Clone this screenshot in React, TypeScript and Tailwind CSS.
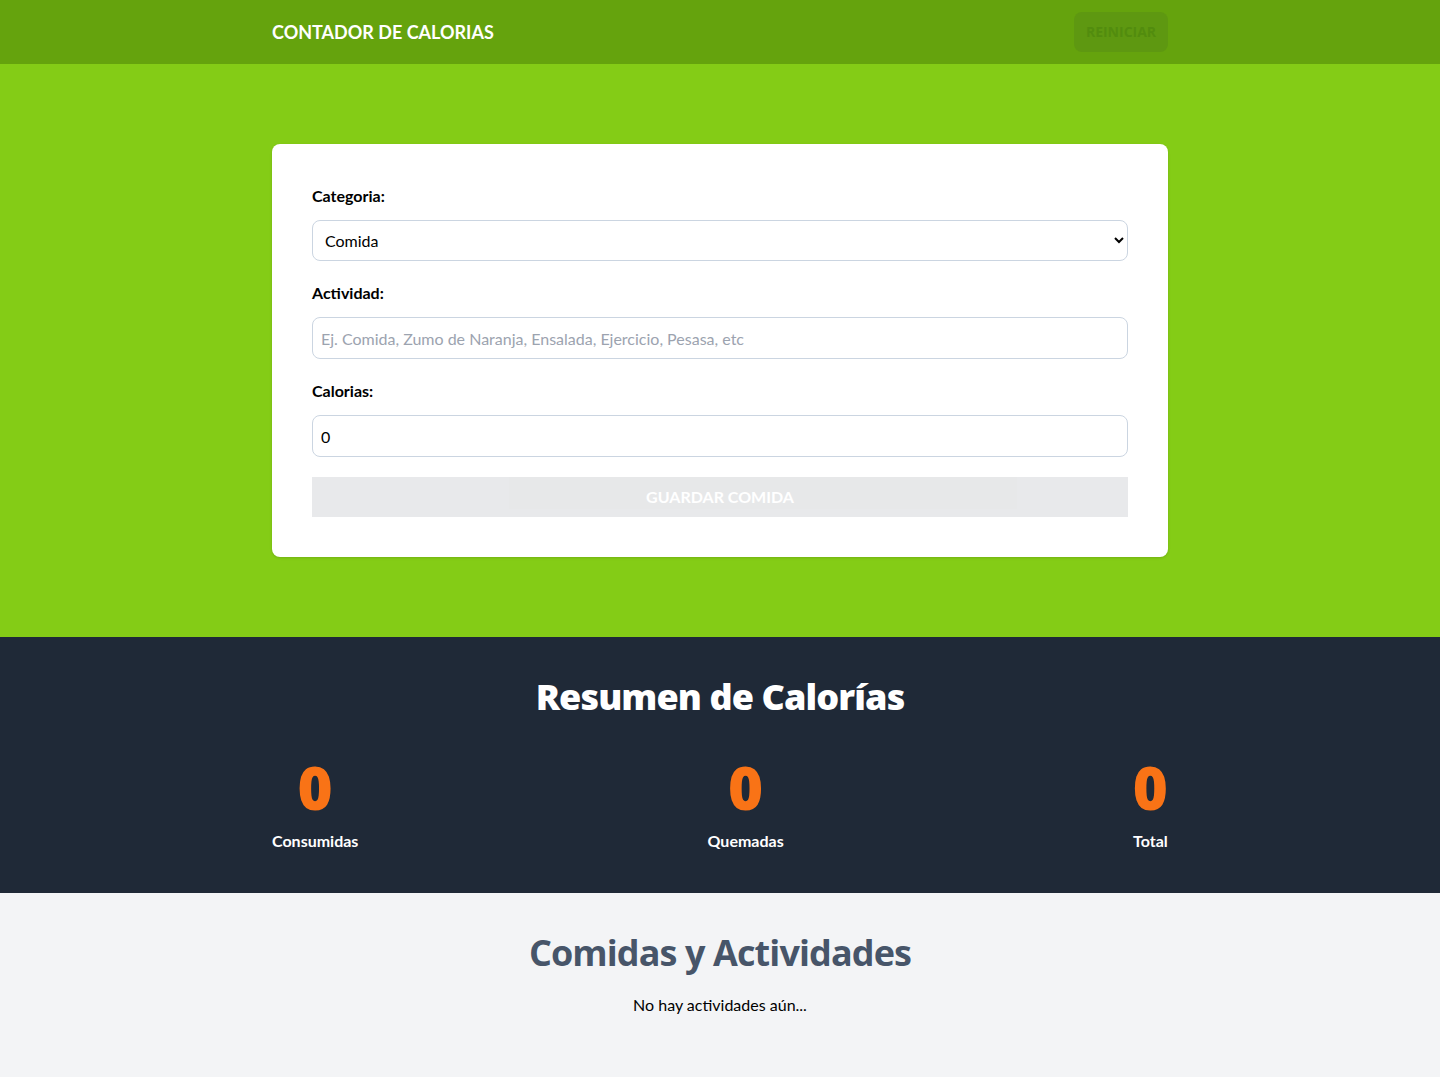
import { useState } from "react";

const font = { fontFamily: 'Lato, "Open Sans", sans-serif' };
const heavy = { fontFamily: '"Open Sans", Lato, sans-serif' };

function Stat({ value, label }: { value: number; label: string }) {
  return (
    <p className="grid grid-cols-1 gap-3 text-center font-bold text-white">
      <span style={heavy} className="text-6xl font-black leading-none text-[#f97316]">{value}</span>
      {label}
    </p>
  );
}

export default function App() {
  const [category, setCategory] = useState("1");
  const [name, setName] = useState("");
  const [calories, setCalories] = useState(0);

  const valid = name.trim() !== "" && calories > 0;

  return (
    <div style={font} className="min-h-screen bg-[#f3f4f6]">
      <header className="bg-[#65a30d] py-3">
        <div className="mx-auto flex max-w-4xl items-center justify-between">
          <h1 className="text-lg font-bold uppercase text-white">Contador de Calorias</h1>
          <button
            disabled
            style={heavy}
            className="h-10 w-[94px] rounded-lg bg-[#5e9811] text-sm font-bold uppercase text-[#528c0e]"
          >
            Reiniciar
          </button>
        </div>
      </header>

      <section className="bg-[#84cc16] px-5 py-20">
        <div className="mx-auto max-w-4xl">
          <form className="space-y-5 rounded-lg bg-white p-10 shadow" onSubmit={(e) => e.preventDefault()}>
            <div className="grid grid-cols-1 gap-3">
              <label htmlFor="category" className="font-bold">Categoria:</label>
              <select
                id="category"
                value={category}
                onChange={(e) => setCategory(e.target.value)}
                className="h-[41px] w-full rounded-lg border border-[#cbd5e1] bg-white px-2"
              >
                <option value="1">Comida</option>
                <option value="2">Ejercicio</option>
              </select>
            </div>

            <div className="grid grid-cols-1 gap-3">
              <label htmlFor="name" className="font-bold">Actividad:</label>
              <input
                id="name"
                type="text"
                value={name}
                onChange={(e) => setName(e.target.value)}
                className="h-[42px] rounded-lg border border-[#cbd5e1] p-2 placeholder:text-[#9ca3af]"
                placeholder="Ej. Comida, Zumo de Naranja, Ensalada, Ejercicio, Pesasa, etc"
              />
            </div>

            <div className="grid grid-cols-1 gap-3">
              <label htmlFor="calories" className="font-bold">Calorias:</label>
              <input
                id="calories"
                type="number"
                value={calories}
                onChange={(e) => setCalories(+e.target.value)}
                className="h-[42px] rounded-lg border border-[#cbd5e1] p-2"
                placeholder="Calorias. ej. 300 o 500"
              />
            </div>

            <button
              type="submit"
              disabled={!valid}
              className="h-10 w-full bg-[#1f2937] p-2 font-bold uppercase text-white disabled:opacity-10"
            >
              Guardar Comida
            </button>
          </form>
        </div>
      </section>

      <section className="bg-[#1f2937] py-10">
        <div className="mx-auto max-w-4xl">
          <h2 style={heavy} className="text-center text-4xl font-black tracking-tight text-white">
            Resumen de Calorías
          </h2>
          <div className="mt-10 flex flex-row items-center justify-between gap-5">
            <Stat value={0} label="Consumidas" />
            <Stat value={0} label="Quemadas" />
            <Stat value={0} label="Total" />
          </div>
        </div>
      </section>

      <section className="mx-auto max-w-4xl p-10">
        <h2 style={heavy} className="text-center text-4xl font-bold tracking-tight text-[#475569]">
          Comidas y Actividades
        </h2>
        <p className="my-5 text-center">No hay actividades aún...</p>
      </section>
    </div>
  );
}
